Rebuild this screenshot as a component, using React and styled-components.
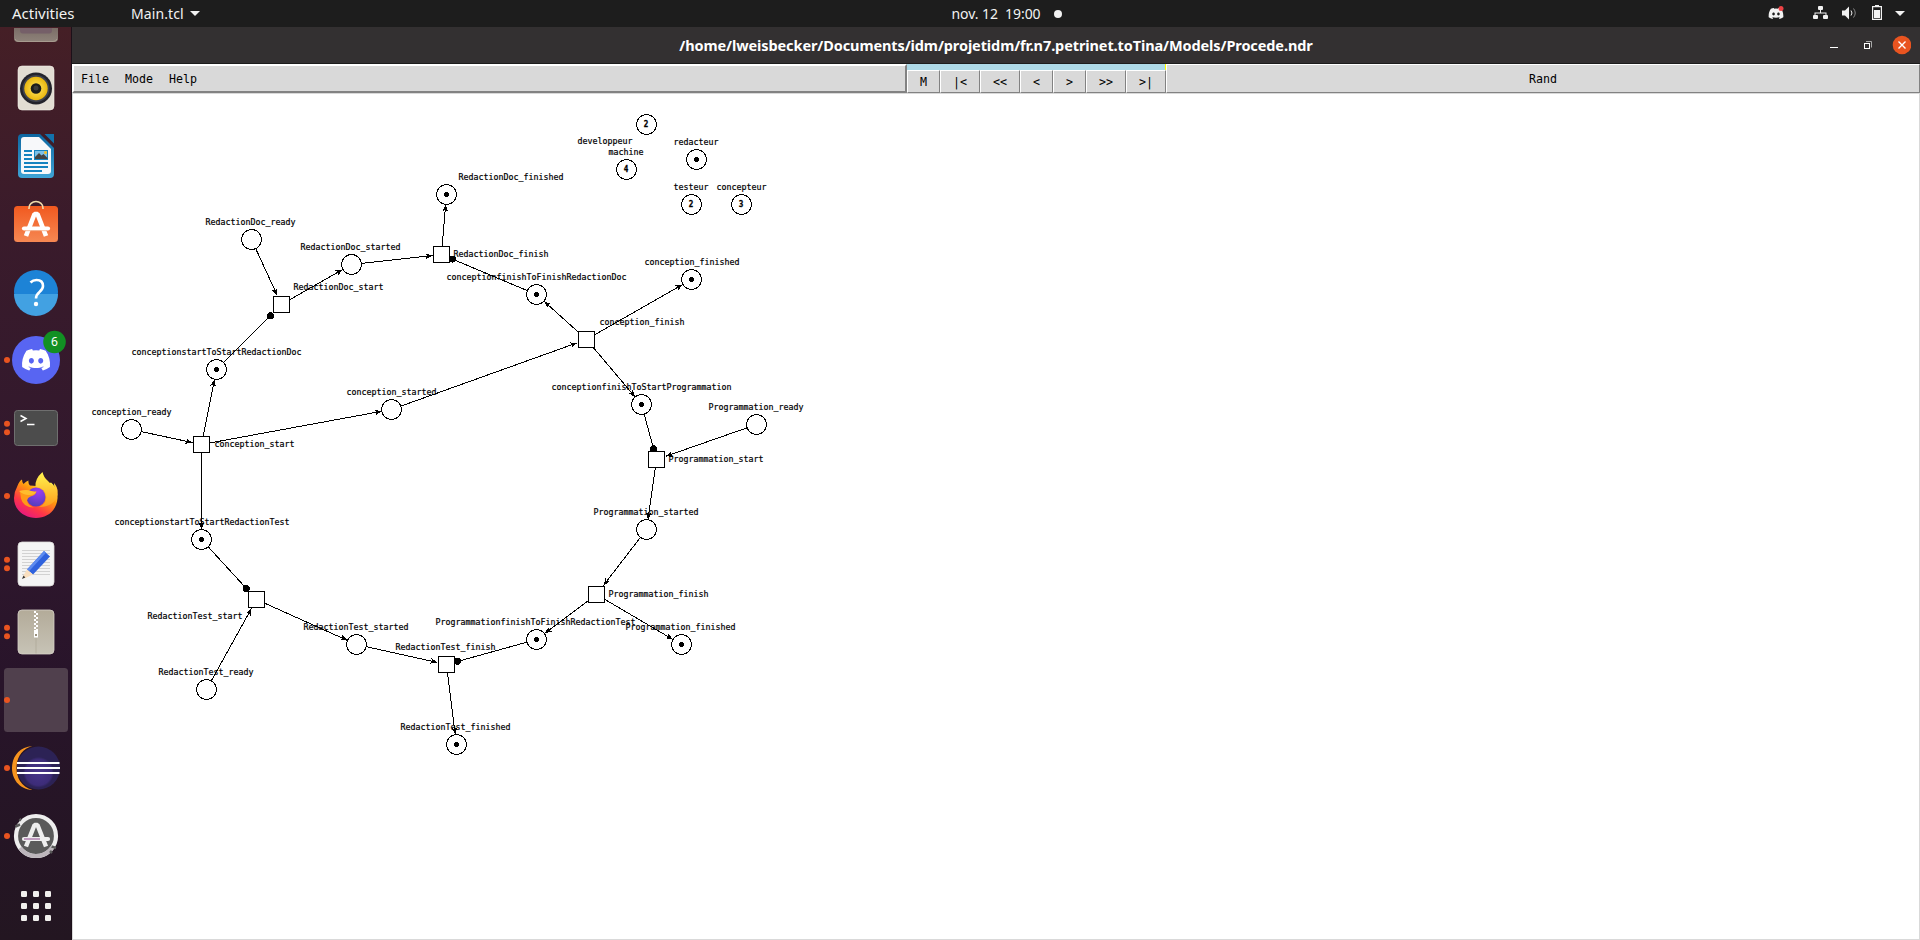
import React from 'react';
import styled, { createGlobalStyle } from 'styled-components';
import { FaDiscord } from 'react-icons/fa';

const GlobalStyle = createGlobalStyle`
  * { box-sizing: border-box; }
  body { margin: 0; overflow: hidden; background: #fff; }
`;

const ui = `'Noto Sans', 'Open Sans', sans-serif`;
const mono = `'DejaVu Sans Mono', 'Liberation Mono', monospace`;

const Desktop = styled.div`
  display: flex;
  flex-direction: column;
  width: 1920px;
  height: 940px;
  overflow: hidden;
  font-family: ${ui};
`;

/* ---------- top panel ---------- */

const TopBar = styled.header`
  display: grid;
  grid-template-columns: 1fr auto 1fr;
  flex: none;
  height: 27px;
  background: #1d1d1d;
  color: #f2f2f2;
  font-size: 14px;
  line-height: 27px;
  white-space: pre;
`;
const BarLeft = styled.div`
  display: flex;
  padding-left: 12px;
`;
const Activities = styled.span`
  width: 119px;
  font-size: 15px;
`;
const AppMenu = styled.span`
  display: flex;
  align-items: center;
  gap: 6px;
  letter-spacing: 0.1px;
`;
const Clock = styled.div`
  display: flex;
  align-items: center;
  gap: 13px;
  padding-left: 93px;
  letter-spacing: -0.05px;
`;
const Dot = styled.i`
  width: 8px;
  height: 8px;
  border-radius: 50%;
  background: #f2f2f2;
`;
const Caret = styled.i`
  border: 5px solid transparent;
  border-top-color: #f2f2f2;
  border-bottom: 0;
`;
const Tray = styled.div`
  display: flex;
  justify-content: flex-end;
  align-items: center;
  padding-right: 15px;
`;

/* ---------- dock ---------- */

const Body = styled.div`
  display: flex;
  flex: 1;
  min-height: 0;
`;
const Dock = styled.nav`
  display: flex;
  flex-direction: column;
  flex: none;
  width: 72px;
  overflow: hidden;
  border-right: 1px solid #1c1019;
  background: linear-gradient(#451f26, #3a1b2b 22%, #31182d 50%, #28142a 72%, #231621);
`;
const Tile = styled.div`
  display: flex;
  flex: none;
  align-items: flex-end;
  height: ${(p) => p.$h || 68}px;
  svg { flex: none; display: block; }
`;

/* ---------- window ---------- */

const Window = styled.section`
  display: flex;
  flex-direction: column;
  flex: 1;
  min-width: 0;
`;
const TitleBar = styled.div`
  display: grid;
  grid-template-columns: 1fr auto 1fr;
  align-items: center;
  flex: none;
  height: 37px;
  border-bottom: 1px solid #1c1c1c;
  background: #333031;
  color: #fff;
`;
const Title = styled.h1`
  grid-column: 2;
  margin: 0;
  font-size: 14.5px;
  font-weight: 700;
  letter-spacing: -0.105px;
  white-space: nowrap;
`;
const Controls = styled.div`
  display: flex;
  justify-content: flex-end;
  padding-right: 9px;
`;
const MenuRow = styled.div`
  display: flex;
  flex: none;
  height: 30px;
  border-bottom: 1px solid #d9d9d9;
  font: 11.63px/27px ${mono};
  color: #000;
`;
const MenuBar = styled.div`
  display: flex;
  gap: 16px;
  width: 835px;
  padding: 0 7px;
  border: 2px solid;
  border-color: #fff #828282 #828282 #fff;
  background: #d9d9d9;
`;
const Stepper = styled.div`
  display: flex;
  width: 259px;
  padding-top: 6px;
  background: linear-gradient(270deg, #ff0 1px, #add8e6 1px);
`;
const StepButton = styled.button`
  width: ${(p) => (p.$wide ? 40 : 33)}px;
  height: 23px;
  padding: 1px 0 0;
  border: 1px solid;
  border-color: #fff #828282 #828282 #fff;
  background: #d9d9d9;
  font: 11.63px/20px ${mono};
  color: #000;
`;
const ModeLabel = styled.div`
  flex: 1;
  border: 1px solid;
  border-color: #fff #828282 #828282 #fff;
  background: #d9d9d9;
  line-height: 29px;
  text-align: center;
`;
const Canvas = styled.main`
  flex: 1;
  min-height: 0;
  border: 1px solid #d9d9d9;
  border-top: 0;
  background: #fff;
  svg { display: block; }
`;
const NetLabel = styled.text`
  font: 8.3px ${mono};
  fill: #000;
  stroke: #000;
  stroke-width: 0.2px;
`;
const Count = styled.text`
  font: bold 9px ${mono};
  stroke: #000;
  stroke-width: 0.3px;
  text-anchor: middle;
`;

/* ---------- Petri net data (screen coordinates) ---------- */

const places = {
  docReady: [251, 239, 0, 'RedactionDoc_ready', 206, 225],
  docStarted: [351, 264, 0, 'RedactionDoc_started', 301, 250],
  docFinished: [446, 194, 1, 'RedactionDoc_finished', 459, 180],
  startToDoc: [216, 369, 1, 'conceptionstartToStartRedactionDoc', 132, 355],
  conReady: [131, 429, 0, 'conception_ready', 92, 415],
  conStarted: [391, 409, 0, 'conception_started', 347, 395],
  conFinished: [691, 279, 1, 'conception_finished', 645, 265],
  developpeur: [646, 124, 2, 'developpeur', 578, 144],
  machine: [626, 169, 4, 'machine', 609, 155],
  redacteur: [696, 159, 1, 'redacteur', 674, 145],
  testeur: [691, 204, 2, 'testeur', 674, 190],
  concepteur: [741, 204, 3, 'concepteur', 717, 190],
  finishToDoc: [536, 294, 1, 'conceptionfinishToFinishRedactionDoc', 447, 280],
  finishToProg: [641, 404, 1, 'conceptionfinishToStartProgrammation', 552, 390],
  progReady: [756, 424, 0, 'Programmation_ready', 709, 410],
  progStarted: [646, 529, 0, 'Programmation_started', 594, 515],
  progFinished: [681, 644, 1, 'Programmation_finished', 626, 630],
  progToTest: [536, 639, 1, 'ProgrammationfinishToFinishRedactionTest', 436, 625],
  startToTest: [201, 539, 1, 'conceptionstartToStartRedactionTest', 115, 525],
  testReady: [206, 689, 0, 'RedactionTest_ready', 159, 675],
  testStarted: [356, 644, 0, 'RedactionTest_started', 304, 630],
  testFinished: [456, 744, 1, 'RedactionTest_finished', 401, 730],
};
const transitions = {
  docStart: [281, 304, 'RedactionDoc_start', 294, 290],
  docFinish: [441, 254, 'RedactionDoc_finish', 454, 257],
  conStart: [201, 444, 'conception_start', 215, 447],
  conFinish: [586, 339, 'conception_finish', 600, 325],
  progStart: [656, 459, 'Programmation_start', 669, 462],
  progFinish: [596, 594, 'Programmation_finish', 609, 597],
  testStart: [256, 599, 'RedactionTest_start', 148, 619],
  testFinish: [446, 664, 'RedactionTest_finish', 396, 650],
};
const arcs = [
  ['docReady', 'docStart'], ['docStart', 'docStarted'], ['docStarted', 'docFinish'],
  ['docFinish', 'docFinished'], ['startToDoc', 'docStart', true], ['finishToDoc', 'docFinish', true],
  ['conReady', 'conStart'], ['conStart', 'startToDoc'], ['conStart', 'conStarted'],
  ['conStart', 'startToTest'], ['conStarted', 'conFinish'], ['conFinish', 'finishToDoc'],
  ['conFinish', 'conFinished'], ['conFinish', 'finishToProg'], ['finishToProg', 'progStart', true],
  ['progReady', 'progStart'], ['progStart', 'progStarted'], ['progStarted', 'progFinish'],
  ['progFinish', 'progToTest'], ['progFinish', 'progFinished'], ['progToTest', 'testFinish', true],
  ['startToTest', 'testStart', true], ['testReady', 'testStart'], ['testStart', 'testStarted'],
  ['testStarted', 'testFinish'], ['testFinish', 'testFinished'],
];

const rim = (name, ux, uy, pad) =>
  places[name] ? 10 : pad / Math.max(Math.abs(ux), Math.abs(uy));

function Arc({ from, to, read }) {
  const [ax, ay] = places[from] || transitions[from];
  const [bx, by] = places[to] || transitions[to];
  const len = Math.hypot(bx - ax, by - ay);
  const ux = (bx - ax) / len;
  const uy = (by - ay) / len;
  const s = rim(from, ux, uy, 8);
  const e = rim(to, ux, uy, read ? 11 : 9);
  const x = bx + 0.5 - ux * e;
  const y = by + 0.5 - uy * e;
  const at = (l, w) => `${x - ux * l - uy * w},${y - uy * l + ux * w}`;
  return (
    <g>
      <line x1={ax + 0.5 + ux * s} y1={ay + 0.5 + uy * s} x2={x} y2={y} stroke="#000" />
      {read
        ? <circle cx={x} cy={y} r="3.5" />
        : <polygon points={`${x},${y} ${at(7, 2.8)} ${at(5.5, 0)} ${at(7, -2.8)}`} />}
    </g>
  );
}

function Place({ data: [x, y, tokens, label, lx, ly] }) {
  return (
    <g>
      <circle cx={x + 0.5} cy={y + 0.5} r="10" fill="#fff" stroke="#000" />
      {tokens === 1 && <circle cx={x + 0.5} cy={y + 0.5} r="2.6" />}
      {tokens > 1 && <Count x={x} y={y + 3} textLength="4.6" lengthAdjust="spacingAndGlyphs">{tokens}</Count>}
      <NetLabel x={lx - 0.5} y={ly} textLength={label.length * 5}>{label}</NetLabel>
    </g>
  );
}

function Transition({ data: [x, y, label, lx, ly] }) {
  return (
    <g>
      <rect x={x - 7.5} y={y - 7.5} width="16" height="16" fill="#fff" stroke="#000" />
      <NetLabel x={lx - 0.5} y={ly} textLength={label.length * 5}>{label}</NetLabel>
    </g>
  );
}

function PetriNet() {
  return (
    <svg width="1846" height="845" viewBox="73 94 1846 845" shapeRendering="crispEdges">
      {arcs.map(([a, b, read]) => <Arc key={a + b} from={a} to={b} read={read} />)}
      {Object.entries(transitions).map(([k, v]) => <Transition key={k} data={v} />)}
      {Object.entries(places).map(([k, v]) => <Place key={k} data={v} />)}
    </svg>
  );
}

/* ---------- dock icons: each drawn on a 72x68 tile centred at 36,34 ---------- */

function DockItem({ running = 0, h, children }) {
  return (
    <Tile $h={h}>
      <svg width="72" height="68" viewBox="0 0 72 68">
        {children}
        {running === 1 && <circle cx="7" cy="34" r="3" fill="#e95420" />}
        {running === 2 && (
          <g fill="#e95420"><circle cx="7" cy="29.7" r="3" /><circle cx="7" cy="38.3" r="3" /></g>
        )}
      </svg>
    </Tile>
  );
}

const Gradient = ({ id, from, to }) => (
  <linearGradient id={id} x1="0" y1="0" x2="0" y2="1">
    <stop offset="0" stopColor={from} /><stop offset="1" stopColor={to} />
  </linearGradient>
);

const Drive = () => (
  <>
    <defs><Gradient id="drive" from="#5a4a48" to="#8f837a" /></defs>
    <rect x="14" y="20" width="44" height="36" rx="4" fill="url(#drive)" />
    <path d="M15 53q1 2.500 4 2.500h34q3 0 4-2.500" fill="none" stroke="#a89c90" />
    <rect x="20" y="20" width="32" height="27.500" rx="3" fill="#755f68" />
    <rect x="13" y="40" width="46" height="2" fill="#451f26" />
  </>
);
const Music = () => (
  <>
    <defs><radialGradient id="cone"><stop offset="0.3" stopColor="#fbd94a" /><stop offset="1" stopColor="#e9b60e" /></radialGradient></defs>
    <rect x="18" y="12" width="36" height="44" rx="4" fill="#e2ddd3" stroke="#f3f0ea" strokeWidth="0.6" />
    <circle cx="36" cy="34.500" r="16" fill="#23232b" />
    <circle cx="36" cy="34.500" r="13.500" fill="#3f424e" />
    <circle cx="36" cy="34.500" r="11.700" fill="url(#cone)" />
    <circle cx="36" cy="34.500" r="5.300" fill="#1c1c1c" />
    <circle cx="36" cy="34" r="2.500" fill="#3b3b3b" />
  </>
);
const Writer = () => (
  <>
    <defs><Gradient id="writer" from="#0d66a0" to="#3fa4d6" /></defs>
    <path d="M22 12h18l14 14v26q0 4-4 4H22q-4 0-4-4V16q0-4 4-4z" fill="url(#writer)" />
    <path d="M24 15h15l12 12v22q0 3-3 3H24q-3 0-3-3V18q0-3 3-3z" fill="#f7f8fa" />
    <path d="M44.500 12H54v9.500z" fill="#1272ac" />
    <path d="M24 29h8M24 33h8M24 37h8M24 41h24M24 45h24M24 49h18" stroke="#1583c0" strokeWidth="1.800" />
    <rect x="34.500" y="28.500" width="13" height="9" fill="#7cc0e8" stroke="#1583c0" />
    <path d="M35 37v-2l4-4 2.500 2.500 2-1.500 4 4v1z" fill="#444" />
    <circle cx="45.500" cy="30.500" r="1.500" fill="#f6c026" />
  </>
);
const Store = () => (
  <>
    <defs><Gradient id="store" from="#f1591f" to="#f68853" /></defs>
    <rect x="14" y="16" width="44" height="36" rx="3.500" fill="url(#store)" />
    <path d="M29 19v-1a7 6.500 0 0 1 14 0v1" fill="none" stroke="#f0dcac" strokeWidth="1.600" />
    <g fill="none" stroke="#fff">
      <path d="M26 46L34.500 24h3L46 46" strokeWidth="4.600" strokeLinejoin="bevel" />
      <path d="M24 38.500h24" strokeWidth="4.200" strokeLinecap="round" />
      <path d="M25 40.700h22" stroke="#f3a782" strokeWidth="0.800" />
    </g>
  </>
);
const Help = () => (
  <>
    <circle cx="36" cy="34" r="22" fill="#1d83d6" />
    <path d="M14 36a22 22 0 0 0 44 0z" fill="#42a1e2" />
    <path d="M30.500 24.500q2.500-2.500 6-2.500 6.500 0 6.500 6 0 3-3.500 6-3.500 3-3.500 6.500" fill="none" stroke="#fff" strokeWidth="2.600" />
    <circle cx="36" cy="46" r="2.200" fill="#fff" />
  </>
);
const Discord = () => (
  <>
    <circle cx="36" cy="34" r="24" fill="#5865f2" />
    <FaDiscord x="20.800" y="18.500" size="30.500" color="#fff" />
    <circle cx="54.500" cy="16" r="11.300" fill="#129023" />
    <text x="54.500" y="20.300" textAnchor="middle" fontFamily="Noto Sans" fontSize="12" fill="#fff">6</text>
  </>
);
const Terminal = () => (
  <>
    <rect x="14.500" y="16.500" width="43" height="35" rx="3" fill="#4c4c4c" stroke="#6f6f6f" />
    <path d="M20.500 21.500l5.500 3-5.500 3" fill="none" stroke="#fff" strokeWidth="1.500" />
    <path d="M27 30.500h7.500" stroke="#fff" strokeWidth="1.500" />
  </>
);
const Firefox = () => (
  <>
    <defs>
      <linearGradient id="ff" x1="0.850" y1="0.100" x2="0.250" y2="1">
        <stop offset="0" stopColor="#fff44f" /><stop offset="0.350" stopColor="#ff980e" />
        <stop offset="0.700" stopColor="#ff3647" /><stop offset="1" stopColor="#e31587" />
      </linearGradient>
      <radialGradient id="globe" cx="0.600" cy="0.200" r="0.900">
        <stop offset="0" stopColor="#a03bf5" /><stop offset="1" stopColor="#4a3fb5" />
      </radialGradient>
      <Gradient id="tail" from="#fff44f" to="#ff9d1c" />
    </defs>
    <path d="M17 25q2-6 5-7.500 0 3 1.500 4.500 2.500-3 5-3.500-.5 3 1.500 5l13 1 8-4 2 2q5 6 4.500 14c-1 12-10 19.500-21.500 19.500S14 48 14 36q0-6 3-11z" fill="url(#ff)" />
    <path d="M42.500 10q-8 7-7 15 8 0 10.500 7 2 9-7 13 15 0 18.500-12 .8-6-2-10l-1.500-2q0 3 .500 4-4-3-7-6.500-4-3.500-5-8.500z" fill="url(#tail)" />
    <circle cx="36" cy="35" r="9.500" fill="url(#globe)" />
    <path d="M20 30q7-3 11-1 4 1 5.500.5-1 4-6 5-3 1-3.500 4 1 5 7 7-11 0-13-9-.5-4-1-6.500z" fill="#ff9a18" />
    <path d="M19 29q8-2 12 0 3 1 5.500.5-2 4-8 3.500-5 0-9.500-4z" fill="#ffbd2e" />
  </>
);
const Editor = () => (
  <>
    <rect x="18" y="12" width="36" height="44" rx="4" fill="#f4f4f4" stroke="#dcdad8" strokeWidth="0.800" />
    <path d="M22 20.500h28M22 23.500h28M22 26.500h28M22 29.500h28M22 32.500h28M22 35.500h28M22 38.500h28M22 41.500h28M22 44.500h28" stroke="#d2d2d2" />
    <path d="M27 39.500L44 21l6 5.500-17 18z" fill="#2f62dd" />
    <path d="M27 39.500L44 21l2 1.800-17 18.500z" fill="#5c8bf0" />
    <path d="M27 39.500l6 5-8.500 4-2-1.500z" fill="#f9dfc0" />
    <path d="M23.500 45.500l1.800 2-3.300 1.500z" fill="#333" />
  </>
);
const Archive = () => (
  <>
    <defs><Gradient id="zip" from="#b3ab99" to="#c7c3b6" /></defs>
    <rect x="18" y="12" width="36" height="44" rx="4" fill="url(#zip)" stroke="#d5d1c6" strokeWidth="0.800" />
    <path d="M36 40v15.500" stroke="#aea795" strokeWidth="0.700" />
    <path d="M35 13v19" stroke="#fff" strokeWidth="2" strokeDasharray="2 2" />
    <path d="M37 15v18" stroke="#fff" strokeWidth="2" strokeDasharray="2 2" />
    <rect x="34" y="32" width="4" height="7.500" fill="#fff" />
    <rect x="35" y="36" width="2" height="2" fill="#9b927e" />
  </>
);
const Blank = () => <rect x="4" y="2" width="64" height="64" rx="3.500" fill="#50404d" />;
const Eclipse = () => (
  <>
    <defs><radialGradient id="ecl" cx="0.500" cy="0.600" r="0.550"><stop offset="0" stopColor="#47358a" /><stop offset="0.550" stopColor="#3d2c78" /><stop offset="0.650" stopColor="#2c2255" /></radialGradient></defs>
    <path d="M32.500 12C18 13 12 24 12 34s6 21 20.500 22C21 53 16.500 43 16.500 34S21 15 32.500 12z" fill="#f7941e" />
    <circle cx="38.500" cy="34" r="21.500" fill="url(#ecl)" />
    <path d="M17 29h42.500M17 34h43M17 39h42.500" stroke="#fff" strokeWidth="2" />
  </>
);
const Updater = () => (
  <>
    <circle cx="36" cy="34" r="20" fill="#5a5a5a" stroke="#eee" strokeWidth="4.200" />
    <path d="M20 46a20 20 0 0 0 32 0" fill="none" stroke="#bdb6bc" strokeWidth="4.200" />
    <path d="M15.500 24.500l4.500-2M21 18.500l-1.500-1.500M56 46l-4.500-1.500M50 49l2 2" stroke="#5a5a5a" strokeWidth="2.500" />
    <g fill="none" stroke="#eee">
      <path d="M26 44.500L34.500 23h3L46 44.500" strokeWidth="4.400" strokeLinejoin="bevel" />
      <path d="M24 37h24" strokeWidth="4.200" strokeLinecap="round" />
      <path d="M24 37h16" stroke="#924a92" strokeWidth="1" />
    </g>
  </>
);
const AppGrid = () => (
  <g fill="#f2f0ee">
    {[21, 33, 45].map((x) => [19, 31, 43].map((y) => (
      <rect key={`${x}-${y}`} x={x} y={y} width="6" height="6" rx="1.200" />
    )))}
  </g>
);

/* ---------- tray and window buttons ---------- */

const TrayIcons = () => (
  <svg width="140" height="27" viewBox="1765 0 140 27">
    <FaDiscord x="1768" y="5.500" size="16" color="#f2f2f2" />
    <circle cx="1781" cy="8.500" r="2.500" fill="#ed4245" />
    <g fill="#f2f2f2">
      <rect x="1818" y="6" width="5" height="4" rx="1" />
      <rect x="1813" y="15" width="5" height="4" rx="1" />
      <rect x="1823" y="15" width="5" height="4" rx="1" />
      <path d="M1820 10h1v2.500h5.500V15h-1v-1.500h-10V15h-1v-2.500h5.500z" />
      <path d="M1842 10.500h3l4-4v13l-4-4h-3z" />
      <path d="M1872 6h3V5h4v1h3v14h-10zM1873.200 7.200v11.600h7.600V7.200z" fillRule="evenodd" />
      <rect x="1874" y="10" width="6" height="8" />
      <path d="M1895 11h10l-5 5z" />
    </g>
    <path d="M1851 10.500q2 2.500 0 5" fill="none" stroke="#f2f2f2" />
    <path d="M1853.500 8.500q3.500 4.500 0 9" fill="none" stroke="#8a8a8a" />
  </svg>
);
const WindowButtons = () => (
  <svg width="90" height="36" viewBox="1821 27 90 36">
    <path d="M1830 47.500h8" stroke="#fff" />
    <path d="M1866 41.500h5.500v6" fill="none" stroke="#aaa" />
    <rect x="1864.500" y="43.500" width="5" height="5" fill="none" stroke="#fff" />
    <circle cx="1902" cy="45" r="9.300" fill="#e95420" />
    <path d="M1898.500 41.500l7 7M1905.500 41.500l-7 7" stroke="#fff" strokeWidth="1.400" />
  </svg>
);

const steps = [['M'], ['|<', 1], ['<<', 1], ['<'], ['>'], ['>>', 1], ['>|', 1]];

export default function App() {
  return (
    <Desktop>
      <GlobalStyle />
      <TopBar>
        <BarLeft>
          <Activities>Activities</Activities>
          <AppMenu>Main.tcl<Caret /></AppMenu>
        </BarLeft>
        <Clock>{'nov. 12  19:00'}<Dot /></Clock>
        <Tray><TrayIcons /></Tray>
      </TopBar>
      <Body>
        <Dock>
          <DockItem h={27}><Drive /></DockItem>
          <DockItem><Music /></DockItem>
          <DockItem><Writer /></DockItem>
          <DockItem><Store /></DockItem>
          <DockItem><Help /></DockItem>
          <DockItem running={1}><Discord /></DockItem>
          <DockItem running={2}><Terminal /></DockItem>
          <DockItem running={1}><Firefox /></DockItem>
          <DockItem running={2}><Editor /></DockItem>
          <DockItem running={2}><Archive /></DockItem>
          <DockItem running={1}><Blank /></DockItem>
          <DockItem running={1}><Eclipse /></DockItem>
          <DockItem running={1}><Updater /></DockItem>
          <DockItem h={70}><AppGrid /></DockItem>
        </Dock>
        <Window>
          <TitleBar>
            <Title>/home/lweisbecker/Documents/idm/projetidm/fr.n7.petrinet.toTina/Models/Procede.ndr</Title>
            <Controls><WindowButtons /></Controls>
          </TitleBar>
          <MenuRow>
            <MenuBar><span>File</span><span>Mode</span><span>Help</span></MenuBar>
            <Stepper>
              {steps.map(([t, wide]) => <StepButton key={t} $wide={wide}>{t}</StepButton>)}
            </Stepper>
            <ModeLabel>Rand</ModeLabel>
          </MenuRow>
          <Canvas><PetriNet /></Canvas>
        </Window>
      </Body>
    </Desktop>
  );
}
